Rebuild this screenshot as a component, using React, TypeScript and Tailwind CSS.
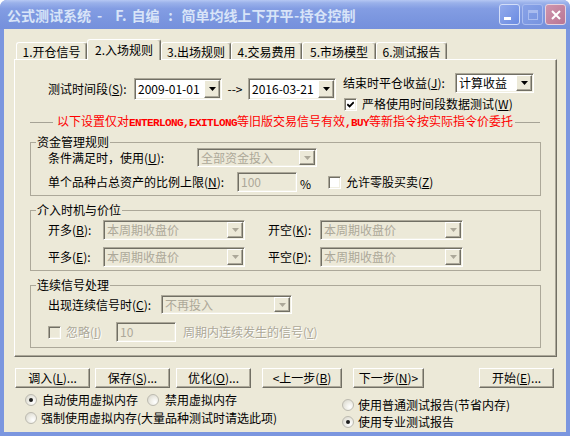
import React from "react";

const SUNK =
  "border border-t-[#aca899] border-l-[#aca899] border-r-white border-b-white shadow-[inset_1px_1px_0_#716f64,inset_-1px_-1px_0_#f1efe2]";
const RAISED =
  "border border-t-white border-l-white border-r-[#716f64] border-b-[#716f64] shadow-[inset_-1px_-1px_0_#aca899]";

function K({ k }: { k: string }) {
  return (
    <>
      (<span className="underline underline-offset-[1px]">{k}</span>)
    </>
  );
}

function Arrow({ dis }: { dis?: boolean }) {
  return (
    <svg width="7" height="4" viewBox="0 0 7 4">
      <path d="M0 0h7L3.5 4z" fill={dis ? "#aca899" : "#000"} />
    </svg>
  );
}

function Combo({ w, text, dis }: { w: string; text: string; dis?: boolean }) {
  return (
    <div
      className={`${w} ${SUNK} flex p-[1px] ${
        dis ? "bg-[#ece9d8] text-[#aca899]" : "bg-white text-black"
      }`}
    >
      <div className="flex-1 flex items-center pl-[2px] whitespace-nowrap overflow-hidden">
        {text}
      </div>
      <div className={`w-[16px] flex items-center justify-center bg-[#ece9d8] ${RAISED}`}>
        <Arrow dis={dis} />
      </div>
    </div>
  );
}

function Edit({ w, text, dis }: { w: string; text: string; dis?: boolean }) {
  return (
    <div
      className={`${w} ${SUNK} flex items-center pl-[3px] ${
        dis ? "bg-[#ece9d8] text-[#aca899]" : "bg-white text-black"
      }`}
    >
      {text}
    </div>
  );
}

function Check({ on, dis }: { on?: boolean; dis?: boolean }) {
  return (
    <div
      className={`w-[13px] h-[13px] shrink-0 ${SUNK} ${
        dis ? "bg-[#ece9d8]" : "bg-white"
      } flex items-center justify-center`}
    >
      {on && (
        <svg width="7" height="7" viewBox="0 0 7 7">
          <path d="M0.3 3.2 L2.6 5.5 L6.8 1.2" stroke="#000" strokeWidth="1.8" fill="none" />
        </svg>
      )}
    </div>
  );
}

function Radio({ on }: { on?: boolean }) {
  return (
    <div className="w-[12px] h-[12px] shrink-0 rounded-full border border-[#bcbab0] bg-[radial-gradient(circle_at_70%_70%,#ffffff_0%,#eeede6_45%,#d4d2c8_100%)] flex items-center justify-center">
      {on && <div className="w-[4px] h-[4px] rounded-full bg-[#1e1e1e]" />}
    </div>
  );
}

function Btn({ w, children }: { w: string; children: React.ReactNode }) {
  return (
    <div
      className={`${w} h-[20px] flex items-center justify-center bg-[#ece9d8] whitespace-nowrap ${RAISED}`}
    >
      {children}
    </div>
  );
}

function Tab({ w, sel, children }: { w: string; sel?: boolean; children: React.ReactNode }) {
  return (
    <div
      className={`${w} ${
        sel ? "h-[21px] -mb-px relative z-10 pt-[3px]" : "h-[17px] pt-[2px]"
      } flex justify-center items-start bg-[#ece9d8] border-t border-l border-t-white border-l-white border-r border-r-[#716f64] shadow-[inset_-1px_0_0_#aca899] rounded-t-[3px] whitespace-nowrap`}
    >
      {children}
    </div>
  );
}

const DIS = "text-[#aca899] [text-shadow:1px_1px_0_#ffffff]";

export default function App() {
  return (
    <div className="w-[570px] h-[436px] flex flex-col bg-[#7b96df] rounded-t-[7px] overflow-hidden font-['Noto_Sans_CJK_SC',sans-serif] text-[12px] leading-[14px] text-black">
      {/* Title bar */}
      <div className="h-[29px] shrink-0 flex items-center bg-[linear-gradient(to_bottom,#b5c7f3_0%,#9ab1ea_10%,#839de3_30%,#7b96df_65%,#7590dc_100%)]">
        <div className="flex-1 pl-[7px] flex items-center text-[14px] leading-[16px] font-bold text-[#d8e4f8] whitespace-nowrap">
          <span>公式测试系统</span>
          <span className="ml-[6px]">-</span>
          <span className="ml-[13px]">F.</span>
          <span className="ml-[5px]">自编</span>
          <span className="w-[22px] text-center">:</span>
          <span>简单均线上下开平</span>
          <span className="w-[6px] text-center">-</span>
          <span>持仓控制</span>
        </div>
        <div className="flex gap-[2px] pr-[4px]">
          <div className="w-[21px] h-[21px] rounded-[3px] border border-[#d3def8] bg-[linear-gradient(135deg,#93abec,#6a8be2)] flex items-end pl-[4px] pb-[4px]">
            <div className="w-[7px] h-[3px] bg-white" />
          </div>
          <div className="w-[21px] h-[21px] rounded-[3px] border border-[#a9bcef] bg-[linear-gradient(135deg,#88a2e7,#7794e0)] flex items-center justify-center">
            <div className="w-[10px] h-[10px] border border-[#a9bcef] border-t-[3px]" />
          </div>
          <div className="w-[21px] h-[21px] rounded-[3px] border border-[#e8d3de] bg-[linear-gradient(135deg,#cf95ad,#b97594)] flex items-center justify-center">
            <svg width="10" height="10" viewBox="0 0 10 10">
              <path d="M1 1L9 9M9 1L1 9" stroke="#fff" strokeWidth="2" />
            </svg>
          </div>
        </div>
      </div>

      {/* Body */}
      <div className="flex-1 mx-[4px] mb-[4px] bg-[#ece9d8] flex flex-col">
        {/* Tabs */}
        <div className="mt-[10px] ml-[12px] h-[20px] flex items-end">
          <Tab w="w-[71px]">1.开仓信号</Tab>
          <Tab w="w-[74px]" sel>
            2.入场规则
          </Tab>
          <Tab w="w-[70px]">3.出场规则</Tab>
          <Tab w="w-[71px]">4.交易费用</Tab>
          <Tab w="w-[74px]">5.市场模型</Tab>
          <Tab w="w-[71px]">6.测试报告</Tab>
        </div>

        {/* Panel */}
        <div className={`ml-[10px] w-[543px] h-[298px] ${RAISED} pl-[15px] pr-[15px] pt-[13px] flex flex-col`}>
          {/* Row 1 */}
          <div className="flex items-start">
            <div className="mt-[5px] ml-[18px] flex items-center">
              <span className="w-[86px] whitespace-nowrap">
                测试时间段<K k="S" />:
              </span>
              <Combo w="w-[88px] h-[22px]" text="2009-01-01" />
              <span className="w-[26px] text-center">--&gt;</span>
              <Combo w="w-[88px] h-[22px]" text="2016-03-21" />
            </div>
            <div className="ml-[7px] flex flex-col">
              <div className="flex items-center h-[20px]">
                <span className="w-[112px] whitespace-nowrap">
                  结束时平仓收益<K k="J" />:
                </span>
                <Combo w="w-[79px] h-[20px]" text="计算收益" />
              </div>
              <div className="mt-[4px] ml-[1px] flex items-center h-[14px]">
                <Check on />
                <span className="ml-[5px] whitespace-nowrap">
                  严格使用时间段数据测试<K k="W" />
                </span>
              </div>
            </div>
          </div>

          {/* Red notice */}
          <div className="mt-[4px] h-[14px] flex items-center text-[#ff0000] whitespace-nowrap">
            <div className="w-[23px] h-px bg-[#a6a396] mr-[4px]" />
            <span>
              以下设置仅对
              <span className="font-['Liberation_Mono',monospace] text-[11px] font-bold tracking-[-0.6px]">
                ENTERLONG,EXITLONG
              </span>
              等旧版交易信号有效
              <span className="font-['Liberation_Mono',monospace] text-[11px] font-bold tracking-[-0.6px]">
                ,BUY
              </span>
              等新指令按实际指令价委托
            </span>
            <div className="flex-1 h-px bg-[#a6a396] ml-[2px] mr-[1px]" />
          </div>

          {/* Group 1 */}
          <fieldset className="mt-[7px] border border-[#aca899] p-0 m-0 min-w-0">
            <legend className="ml-[5px] px-[1px] leading-[12px]">资金管理规则</legend>
            <div className="pl-[17px] pb-[3px]">
              <div className="flex items-center h-[19px]">
                <span className="w-[149px] whitespace-nowrap">
                  条件满足时，使用<K k="U" />:
                </span>
                <Combo w="w-[120px] h-[19px]" text="全部资金投入" dis />
              </div>
              <div className="flex items-center h-[20px] mt-[5px]">
                <span className="w-[189px] whitespace-nowrap">
                  单个品种占总资产的比例上限<K k="N" />:
                </span>
                <Edit w="w-[60px] h-[20px]" text="100" dis />
                <span className="w-[31px] pl-[3px] pt-[4px]">%</span>
                <Check />
                <span className="ml-[5px] whitespace-nowrap">
                  允许零股买卖<K k="Z" />
                </span>
              </div>
            </div>
          </fieldset>

          {/* Group 2 */}
          <fieldset className="mt-[8px] border border-[#aca899] p-0 m-0 min-w-0">
            <legend className="ml-[5px] px-[1px] leading-[12px]">介入时机与价位</legend>
            <div className="pl-[17px] pb-[3px] pt-[4px]">
              <div className="flex items-center h-[20px]">
                <span className="w-[55px] whitespace-nowrap">
                  开多<K k="B" />:
                </span>
                <Combo w="w-[142px] h-[20px]" text="本周期收盘价" dis />
                <span className="ml-[23px] w-[52px] whitespace-nowrap">
                  开空<K k="K" />:
                </span>
                <Combo w="w-[143px] h-[20px]" text="本周期收盘价" dis />
              </div>
              <div className="flex items-center h-[20px] mt-[7px]">
                <span className="w-[55px] whitespace-nowrap">
                  平多<K k="E" />:
                </span>
                <Combo w="w-[142px] h-[20px]" text="本周期收盘价" dis />
                <span className="ml-[23px] w-[52px] whitespace-nowrap">
                  平空<K k="P" />:
                </span>
                <Combo w="w-[143px] h-[20px]" text="本周期收盘价" dis />
              </div>
            </div>
          </fieldset>

          {/* Group 3 */}
          <fieldset className="mt-[8px] border border-[#aca899] p-0 m-0 min-w-0">
            <legend className="ml-[5px] px-[1px] leading-[12px]">连续信号处理</legend>
            <div className="pl-[17px] pb-[5px] pt-[4px]">
              <div className="flex items-center h-[19px]">
                <span className="w-[113px] whitespace-nowrap">
                  出现连续信号时<K k="C" />:
                </span>
                <Combo w="w-[131px] h-[19px]" text="不再投入" dis />
              </div>
              <div className="flex items-center h-[20px] mt-[8px]">
                <Check dis />
                <span className={`ml-[5px] w-[50px] whitespace-nowrap ${DIS}`}>
                  忽略<K k="I" />
                </span>
                <Edit w="w-[60px] h-[20px]" text="10" dis />
                <span className={`ml-[7px] whitespace-nowrap ${DIS}`}>
                  周期内连续发生的信号<K k="Y" />
                </span>
              </div>
            </div>
          </fieldset>
        </div>

        {/* Buttons */}
        <div className="mt-[11px] ml-[11px] flex items-center">
          <Btn w="w-[75px]">
            调入<K k="L" />...
          </Btn>
          <div className="ml-[5px]">
            <Btn w="w-[75px]">
              保存<K k="S" />...
            </Btn>
          </div>
          <div className="ml-[6px]">
            <Btn w="w-[75px]">
              优化<K k="O" />...
            </Btn>
          </div>
          <div className="ml-[11px]">
            <Btn w="w-[80px]">
              &lt;上一步<K k="B" />
            </Btn>
          </div>
          <div className="ml-[11px]">
            <Btn w="w-[71px]">
              下一步<K k="N" />&gt;
            </Btn>
          </div>
          <div className="ml-[55px]">
            <Btn w="w-[75px]">
              开始<K k="E" />...
            </Btn>
          </div>
        </div>

        {/* Radios */}
        <div className="flex">
          <div className="w-[338px] pl-[21px]">
            <div className="mt-[5px] h-[14px] flex items-center whitespace-nowrap">
              <Radio on />
              <span className="ml-[5px] w-[96px]">自动使用虚拟内存</span>
              <div className="ml-[9px]">
                <Radio />
              </div>
              <span className="ml-[6px]">禁用虚拟内存</span>
            </div>
            <div className="mt-[4px] h-[14px] flex items-center whitespace-nowrap">
              <Radio />
              <span className="ml-[4px]">强制使用虚拟内存(大量品种测试时请选此项)</span>
            </div>
          </div>
          <div>
            <div className="mt-[10px] h-[14px] flex items-center whitespace-nowrap">
              <Radio />
              <span className="ml-[4px]">使用普通测试报告(节省内存)</span>
            </div>
            <div className="mt-[3px] h-[14px] flex items-center whitespace-nowrap">
              <Radio on />
              <span className="ml-[4px]">使用专业测试报告</span>
            </div>
          </div>
        </div>
      </div>
    </div>
  );
}
